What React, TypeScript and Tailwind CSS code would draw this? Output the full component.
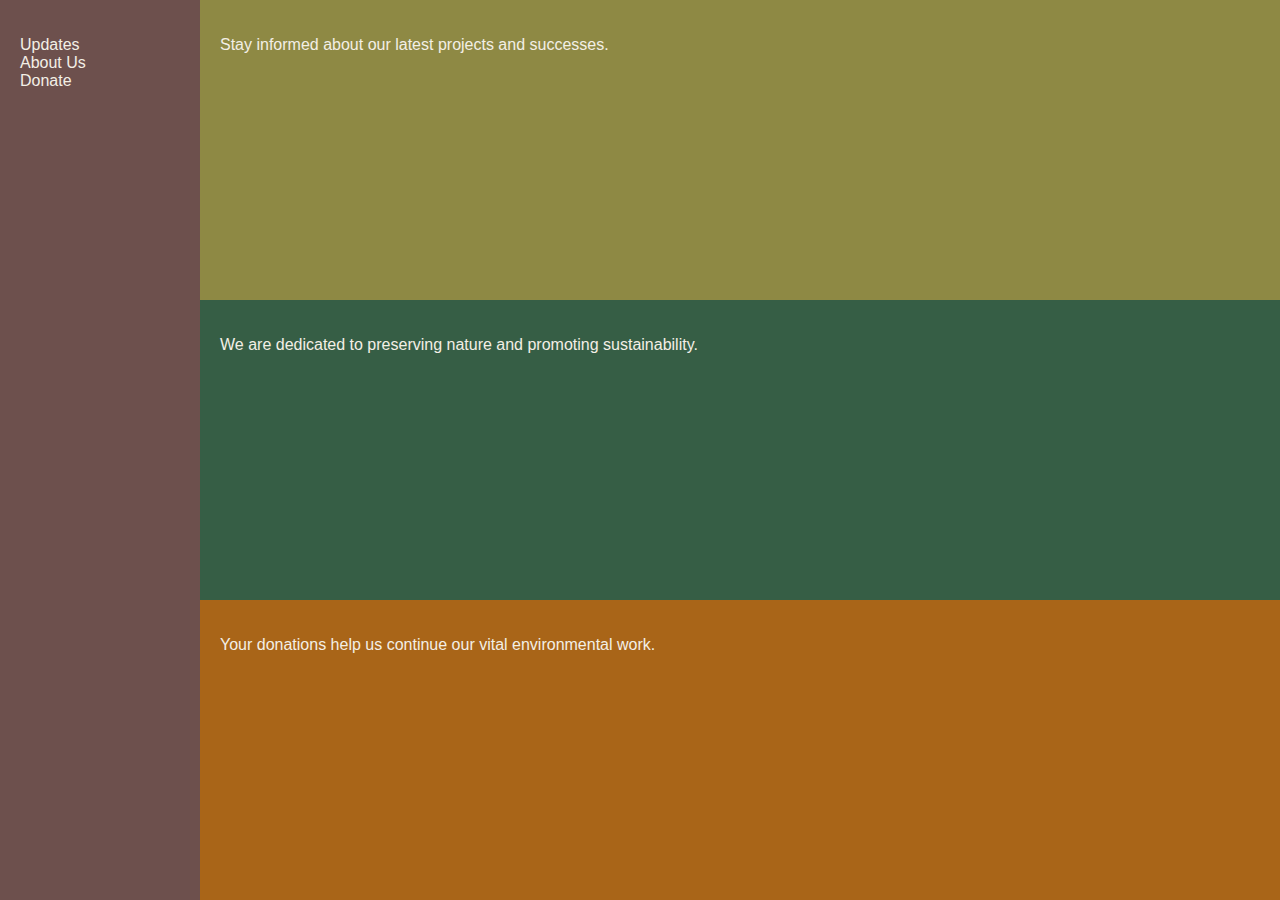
export default function App() {
  const sections = [
    { text: "Stay informed about our latest projects and successes.", bg: "bg-[#8e8944]" },
    { text: "We are dedicated to preserving nature and promoting sustainability.", bg: "bg-[#365e45]" },
    { text: "Your donations help us continue our vital environmental work.", bg: "bg-[#a96518]" },
  ];

  return (
    <div className="flex min-h-[900px] w-full font-['Liberation_Sans',Arial,sans-serif] text-base leading-[18px] text-[#f3efe6]">
      {/* Sidebar */}
      <nav className="w-[200px] shrink-0 bg-[#6d504d] px-5 pt-9">
        <ul>
          <li>Updates</li>
          <li>About Us</li>
          <li>Donate</li>
        </ul>
      </nav>

      {/* Main */}
      <main className="flex flex-1 flex-col">
        {sections.map((s) => (
          <section key={s.text} className={`h-[300px] px-5 pt-9 ${s.bg}`}>
            <p>{s.text}</p>
          </section>
        ))}
      </main>
    </div>
  );
}
